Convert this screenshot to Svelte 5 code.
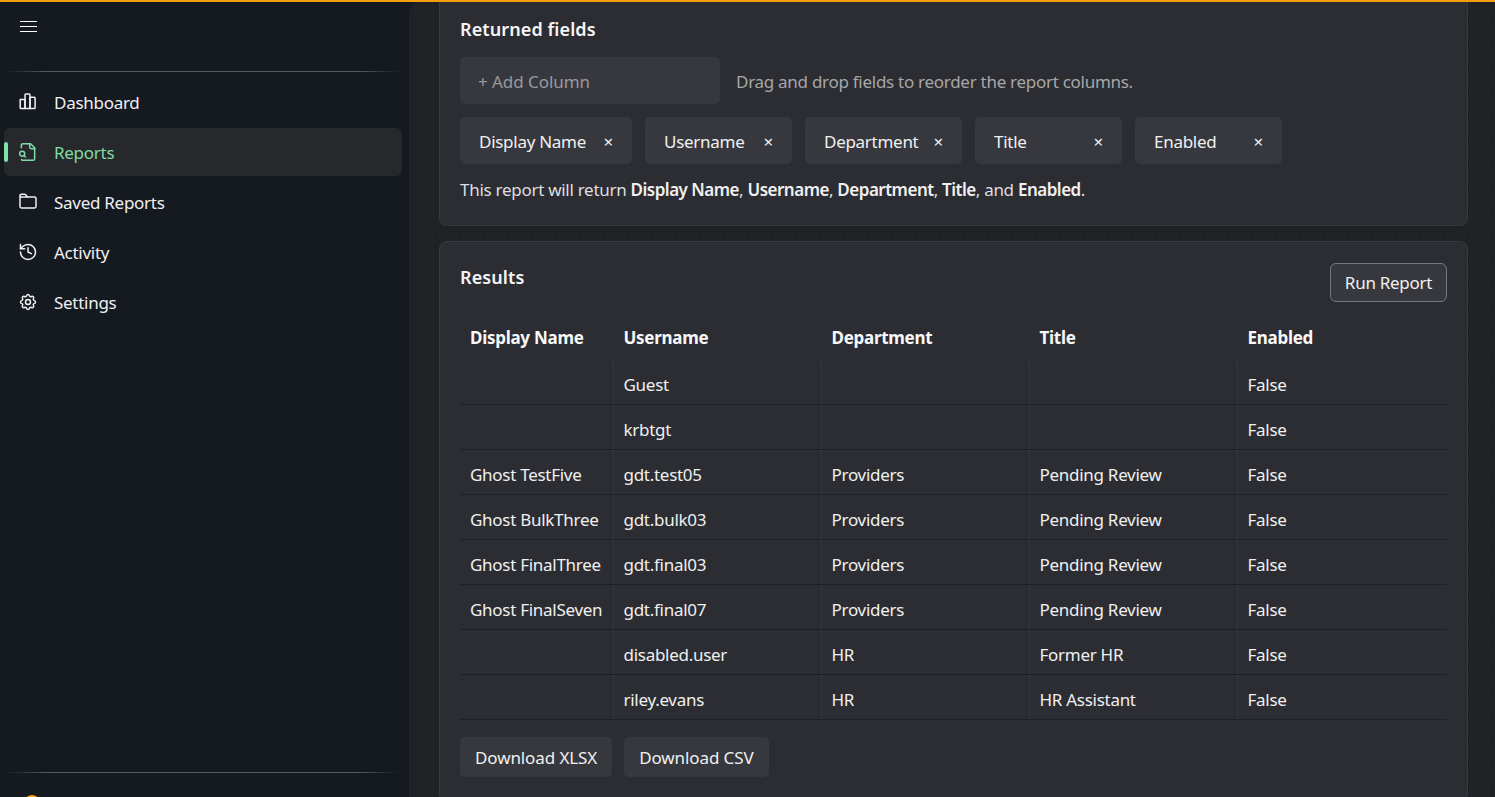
<script>
  const columns = ['Display Name', 'Username', 'Department', 'Title', 'Enabled'];
  const chipWidths = [172, 147, 157, 147, 147];
  const rows = [
    ['', 'Guest', '', '', 'False'],
    ['', 'krbtgt', '', '', 'False'],
    ['Ghost TestFive', 'gdt.test05', 'Providers', 'Pending Review', 'False'],
    ['Ghost BulkThree', 'gdt.bulk03', 'Providers', 'Pending Review', 'False'],
    ['Ghost FinalThree', 'gdt.final03', 'Providers', 'Pending Review', 'False'],
    ['Ghost FinalSeven', 'gdt.final07', 'Providers', 'Pending Review', 'False'],
    ['', 'disabled.user', 'HR', 'Former HR', 'False'],
    ['', 'riley.evans', 'HR', 'HR Assistant', 'False']
  ];
</script>

<div class="app">
  <aside class="sidebar">
    <div class="top">
      <svg class="burger" viewBox="0 0 17 13" width="17" height="13" fill="none" stroke="currentColor" stroke-width="1">
        <path d="M0 1.5h17M0 6.5h17M0 11.5h17" />
      </svg>
    </div>
    <div class="rule"></div>
    <nav>
      <div class="item">
        <svg class="icon" viewBox="0 0 20 20" fill="none" stroke="currentColor" stroke-width="1.5" stroke-linejoin="round">
          <path d="M2.2 7.5H7v9H3a.8.8 0 0 1-.8-.8z" />
          <path d="M7 3a.9.9 0 0 1 .9-.9h3.2a.9.9 0 0 1 .9.9v13.5H7z" />
          <path d="M12 5.2h4.2a.9.9 0 0 1 .9.9v9.6a.8.8 0 0 1-.8.8H12z" />
        </svg>
        <span>Dashboard</span>
      </div>
      <div class="item active">
        <i class="marker"></i>
        <svg class="icon" viewBox="0 0 24 24" fill="none" stroke="currentColor" stroke-width="1.8" stroke-linecap="round" stroke-linejoin="round">
          <path d="M14 2v4a2 2 0 0 0 2 2h4" />
          <path d="M4.268 21a2 2 0 0 0 1.727 1H18a2 2 0 0 0 2-2V7l-5-5H6a2 2 0 0 0-2 2v3" />
          <path d="m9 18-1.5-1.5" />
          <circle cx="5" cy="14" r="3" />
        </svg>
        <span>Reports</span>
      </div>
      <div class="item">
        <svg class="icon" viewBox="0 0 20 20" fill="none" stroke="currentColor" stroke-width="1.5" stroke-linejoin="round">
          <path d="M2 5V3.6a1.4 1.4 0 0 1 1.4-1.4h3.2a1.4 1.4 0 0 1 1.1.5L9.4 5h7.2a1.4 1.4 0 0 1 1.4 1.4v8.2a1.4 1.4 0 0 1-1.4 1.4H3.4A1.4 1.4 0 0 1 2 14.6z" />
          <path d="M2 5h7.4" />
        </svg>
        <span>Saved Reports</span>
      </div>
      <div class="item">
        <svg class="icon" viewBox="0 0 24 24" fill="none" stroke="currentColor" stroke-width="1.8" stroke-linecap="round" stroke-linejoin="round">
          <path d="M3 12a9 9 0 1 0 9-9 9.75 9.75 0 0 0-6.74 2.74L3 8" />
          <path d="M3 3v5h5" />
          <path d="M12 7v5l4 2" />
        </svg>
        <span>Activity</span>
      </div>
      <div class="item">
        <svg class="icon" viewBox="0 0 24 24" fill="none" stroke="currentColor" stroke-width="1.8" stroke-linecap="round" stroke-linejoin="round">
          <path d="M10.325 4.317c.426-1.756 2.924-1.756 3.35 0a1.724 1.724 0 0 0 2.573 1.066c1.543-.94 3.31.826 2.37 2.37a1.724 1.724 0 0 0 1.065 2.572c1.756.426 1.756 2.924 0 3.35a1.724 1.724 0 0 0-1.066 2.573c.94 1.543-.826 3.31-2.37 2.37a1.724 1.724 0 0 0-2.572 1.065c-.426 1.756-2.924 1.756-3.35 0a1.724 1.724 0 0 0-2.573-1.066c-1.543.94-3.31-.826-2.37-2.37a1.724 1.724 0 0 0-1.065-2.572c-1.756-.426-1.756-2.924 0-3.35a1.724 1.724 0 0 0 1.066-2.573c-.94-1.543.826-3.31 2.37-2.37c1 .608 2.296.07 2.572-1.065z" />
          <circle cx="12" cy="12" r="3" />
        </svg>
        <span>Settings</span>
      </div>
    </nav>
    <div class="foot">
      <div class="rule"></div>
      <div class="avatar"></div>
    </div>
  </aside>

  <main>
    <section class="card first">
      <h2>Returned fields</h2>
      <div class="add-row">
        <div class="add">+ Add Column</div>
        <p class="hint">Drag and drop fields to reorder the report columns.</p>
      </div>
      <div class="chips">
        {#each columns as c, i}
          <div class="chip" style="width: {chipWidths[i]}px"><span>{c}</span><b>×</b></div>
        {/each}
      </div>
      <p class="summary">This report will return <strong>Display Name</strong>, <strong>Username</strong>, <strong>Department</strong>, <strong>Title</strong>, and <strong>Enabled</strong>.</p>
    </section>

    <section class="card results">
      <div class="head">
        <h2>Results</h2>
        <button class="run">Run Report</button>
      </div>
      <table>
        <colgroup>
          <col class="c1" /><col class="c2" /><col class="c2" /><col class="c2" /><col />
        </colgroup>
        <thead>
          <tr>{#each columns as c}<th>{c}</th>{/each}</tr>
        </thead>
        <tbody>
          {#each rows as r}
            <tr>{#each r as v}<td>{v}</td>{/each}</tr>
          {/each}
        </tbody>
      </table>
      <div class="downloads">
        <button class="dl">Download XLSX</button>
        <button class="dl">Download CSV</button>
      </div>
    </section>
  </main>
</div>

<style>
  :global(body) {
    margin: 0;
    background: #151920;
    overflow: hidden;
  }
  .app {
    display: grid;
    grid-template-columns: 409px 1fr;
    height: 797px;
    border-top: 2px solid #f59e0b;
    box-sizing: border-box;
    overflow: hidden;
    font-family: "Noto Sans", "Open Sans", sans-serif;
    font-size: 17px;
    letter-spacing: -0.28px;
    color: #f0f0f1;
  }
  .sidebar {
    background: #151920;
    display: flex;
    flex-direction: column;
    min-height: 0;
  }
  .top {
    height: 69px;
    padding: 18px 0 0 20px;
    box-sizing: border-box;
  }
  .burger {
    display: block;
    color: #fff;
  }
  .rule {
    height: 1px;
    margin: 0 9px 0 6px;
    background: linear-gradient(90deg, transparent, #55585c 10%, #55585c 90%, transparent);
  }
  nav {
    padding: 6px 7px 0 4px;
    display: flex;
    flex-direction: column;
    gap: 2px;
  }
  .item {
    position: relative;
    height: 48px;
    display: flex;
    align-items: center;
    gap: 16px;
    padding-left: 14px;
    border-radius: 6px;
    color: #f0f0f1;
  }
  .item .icon {
    width: 20px;
    height: 20px;
    flex: none;
  }
  .item.active {
    color: #7edca6;
    background-color: #2a2c30;
    background-image: radial-gradient(rgba(0, 0, 0, 0.22) 0.6px, transparent 0.8px);
    background-size: 2px 2px;
  }
  .marker {
    position: absolute;
    left: 0;
    top: 14px;
    width: 4px;
    height: 20px;
    border-radius: 2px;
    background: #7ee2a8;
  }
  .foot {
    margin-top: auto;
    height: 25px;
    position: relative;
    overflow: hidden;
  }
  .avatar {
    position: absolute;
    left: 24px;
    top: 23px;
    width: 16px;
    height: 16px;
    border-radius: 50%;
    background: #f59e0b;
  }
  main {
    min-width: 0;
    overflow: hidden;
    padding: 0 27px 0 30px;
    border-top-left-radius: 12px;
    background-color: #202226;
    background-image: radial-gradient(rgba(0, 0, 0, 0.18) 0.6px, transparent 0.9px);
    background-size: 6px 6px;
    display: flex;
    flex-direction: column;
    gap: 15px;
  }
  .card {
    background: #2c2d32;
    border: 1px solid #373941;
    border-radius: 8px;
    padding: 0 20px;
    flex: none;
  }
  .first {
    border-top: 0;
    border-top-left-radius: 0;
    border-top-right-radius: 0;
    height: 224px;
    box-sizing: border-box;
  }
  h2 {
    margin: 0;
    font-size: 18px;
    font-weight: 600;
    letter-spacing: 0.1px;
    color: #f5f5f6;
    line-height: 26px;
  }
  .first h2 {
    padding-top: 14px;
  }
  .add-row {
    margin-top: 15px;
    display: flex;
    align-items: center;
    gap: 16px;
  }
  .add {
    width: 260px;
    height: 47px;
    box-sizing: border-box;
    padding: 2px 0 0 18px;
    display: flex;
    align-items: center;
    background: #37383d;
    border-radius: 5px;
    color: #98999d;
    letter-spacing: -0.05px;
  }
  .hint {
    margin: 2px 0 0;
    color: #a6a7aa;
  }
  .chips {
    margin-top: 13px;
    display: flex;
    gap: 13px;
  }
  .chip {
    height: 47px;
    box-sizing: border-box;
    padding: 2px 19px 0;
    display: flex;
    align-items: center;
    justify-content: space-between;
    background: #37383d;
    border-radius: 5px;
    color: #f0f0f1;
  }
  .chip b {
    font-weight: 400;
    font-size: 17px;
    line-height: 1;
  }
  .summary {
    margin: 14px 0 0;
    line-height: 24px;
    color: #dedee0;
  }
  .summary strong {
    font-weight: 600;
    color: #f0f0f1;
    letter-spacing: -0.5px;
  }
  .results {
    padding-bottom: 24px;
  }
  .head {
    display: flex;
    justify-content: space-between;
    align-items: flex-start;
    padding-top: 21px;
  }
  .head h2 {
    padding-top: 1px;
  }
  .run {
    height: 39px;
    width: 117px;
    border: 1.5px solid #77787c;
    border-radius: 6px;
    background: #37383d;
    color: #f0f0f1;
    font: inherit;
    letter-spacing: inherit;
    padding: 0;
  }
  table {
    width: 987px;
    table-layout: fixed;
    border-collapse: collapse;
    margin-top: 14px;
  }
  .c1 {
    width: 153px;
  }
  .c2 {
    width: 208px;
  }
  th {
    text-align: left;
    font-weight: 700;
    font-size: 17px;
    height: 43px;
    padding: 0 10px 1px;
    color: #f8f8f9;
  }
  th + th {
    border-left: 1px solid transparent;
  }
  td {
    height: 39px;
    padding: 5px 10px 0;
    border-bottom: 1px solid #1f2024;
    color: #f0f0f1;
    white-space: nowrap;
  }
  td + td {
    border-left: 1px dotted #3a3b40;
  }
  .downloads {
    margin-top: 17px;
    display: flex;
    gap: 12px;
  }
  .dl {
    height: 40px;
    padding: 0 15px;
    border: 0;
    border-radius: 5px;
    background: #37383d;
    color: #f0f0f1;
    font: inherit;
    letter-spacing: -0.1px;
  }
</style>
